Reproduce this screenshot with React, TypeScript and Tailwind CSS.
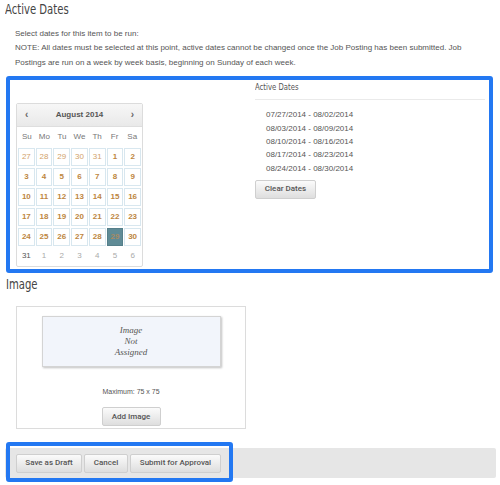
import React from "react";

const narrow = { fontFamily: '"Liberation Sans Narrow", "DejaVu Sans Condensed", Roboto, sans-serif' };
const arial = { fontFamily: '"Liberation Sans", Arial, sans-serif' };
const roboto = { fontFamily: 'Roboto, "Liberation Sans", sans-serif' };

type Cell = { d: number; kind: "prev" | "cur" | "sel" };

const rows: Cell[][] = [
  [27, 28, 29, 30, 31].map((d) => ({ d, kind: "prev" as const })).concat([1, 2].map((d) => ({ d, kind: "cur" as const }))),
  [3, 4, 5, 6, 7, 8, 9].map((d) => ({ d, kind: "cur" as const })),
  [10, 11, 12, 13, 14, 15, 16].map((d) => ({ d, kind: "cur" as const })),
  [17, 18, 19, 20, 21, 22, 23].map((d) => ({ d, kind: "cur" as const })),
  [24, 25, 26, 27, 28, 29, 30].map((d) => ({ d, kind: d === 29 ? ("sel" as const) : ("cur" as const) })),
];
const lastRow = [31, 1, 2, 3, 4, 5, 6];

function Calendar() {
  return (
    <div className="w-[127px] border border-[#dcdcdc] rounded-[2px] bg-white" style={arial}>
      <div className="h-[23px] flex items-center justify-between px-[8px] bg-gradient-to-b from-[#f7f7f7] to-[#e9e9e9] border-b border-[#dedede] text-[#666]">
        <span className="text-[10px] font-bold leading-none">‹</span>
        <span className="text-[8px] font-bold text-[#555]">August 2014</span>
        <span className="text-[10px] font-bold leading-none">›</span>
      </div>
      <div className="grid grid-cols-7 h-[21px] items-center px-[1px] text-[8px] text-[#777]">
        {["Su", "Mo", "Tu", "We", "Th", "Fr", "Sa"].map((n) => (
          <div key={n} className="text-center">{n}</div>
        ))}
      </div>
      <div className="flex flex-col gap-y-[2px] px-[1px]">
        {rows.map((r, i) => (
          <div key={i} className="grid grid-cols-7 gap-x-[1px]">
            {r.map((c, j) => (
              <div
                key={j}
                className={
                  "h-[18px] flex items-center justify-center text-[8px] border " +
                  (c.kind === "sel"
                    ? "bg-[#5f8b96] border-[#557f8a] text-[#a88a62] font-bold"
                    : c.kind === "prev"
                    ? "border-[#d8e7ef] text-[#d2a26a]"
                    : "border-[#d8e7ef] text-[#bd8640] font-bold")
                }
              >
                {c.d}
              </div>
            ))}
          </div>
        ))}
      </div>
      <div className="grid grid-cols-7 gap-x-[1px] px-[1px] h-[18px] items-center mt-[1px] mb-[1px]">
        {lastRow.map((d, j) => (
          <div key={j} className={"text-center text-[8px] " + (j === 0 ? "text-[#555]" : "text-[#aaa]")}>
            {d}
          </div>
        ))}
      </div>
    </div>
  );
}

function Btn({ children, className = "" }: { children: React.ReactNode; className?: string }) {
  return (
    <div
      className={
        "h-[19px] flex items-center justify-center border border-[#cfcfcf] rounded-[2px] bg-gradient-to-b from-[#fbfbfb] to-[#dedede] text-[#555] text-[8px] font-medium " +
        className
      }
      style={roboto}
    >
      {children}
    </div>
  );
}

export default function App() {
  return (
    <div className="w-[500px] h-[485px] bg-white overflow-hidden relative text-[#555]">
      <h2 className="pl-[5px] pt-[1px] text-[14px] leading-[16px] text-[#444]" style={narrow}>
        <span className="inline-block scale-x-[0.8] origin-left">Active Dates</span>
      </h2>
      <div className="ml-[15px] mt-[10px] w-[470px] text-[8px] leading-[14.3px] text-[#555]" style={arial}>
        <p>Select dates for this item to be run:</p>
        <p>
          NOTE: All dates must be selected at this point, active dates cannot be changed once the Job Posting has been
          submitted. Job Postings are run on a week by week basis, beginning on Sunday of each week.
        </p>
      </div>

      <div className="mt-[6px] ml-[6px] w-[487px] h-[197px] border-4 border-[#2378f2] rounded-[3px] flex">
        <div className="pl-[6px] pt-[23px] w-[245px]">
          <Calendar />
        </div>
        <div className="pt-[1px] w-[230px]">
          <div className="text-[9px] text-[#555] pb-[5px] border-b border-[#eaeaea]" style={narrow}>
            <span className="inline-block scale-x-[0.85] origin-left">Active Dates</span>
          </div>
          <ul className="pl-[11px] pt-[8px] text-[8px] leading-[13.3px] text-[#555]" style={arial}>
            <li>07/27/2014 - 08/02/2014</li>
            <li>08/03/2014 - 08/09/2014</li>
            <li>08/10/2014 - 08/16/2014</li>
            <li>08/17/2014 - 08/23/2014</li>
            <li>08/24/2014 - 08/30/2014</li>
          </ul>
          <Btn className="mt-[5px] w-[61px]">Clear Dates</Btn>
        </div>
      </div>

      <h2 className="pl-[6px] mt-[3px] text-[14px] leading-[16px] text-[#444]" style={narrow}>
        <span className="inline-block scale-x-[0.8] origin-left">Image</span>
      </h2>
      <div className="ml-[16px] mt-[14px] w-[230px] h-[123px] border border-[#dcdcdc] flex flex-col items-center pt-[9px]">
        <div
          className="w-[179px] h-[51px] bg-[#f2f5fb] border border-[#d4d4d4] shadow-[1px_1px_2px_rgba(0,0,0,0.25)] flex flex-col items-center justify-center text-[9px] leading-[11px] italic text-[#555]"
          style={{ fontFamily: '"Liberation Serif", "Times New Roman", serif' }}
        >
          <span>Image</span>
          <span>Not</span>
          <span>Assigned</span>
        </div>
        <div className="mt-[20px] text-[7px] text-[#555]" style={arial}>
          Maximum: 75 x 75
        </div>
        <Btn className="mt-[10px] w-[59px] text-[#444]">Add Image</Btn>
      </div>

      <div className="relative ml-[5px] mt-[19px] w-[491px] h-[30px] bg-[#e6e6e6] rounded-[2px]">
        <div className="absolute left-[1px] top-[-6px] w-[227px] h-[40px] border-4 border-[#2378f2] rounded-[3px]" />
        <div className="absolute left-[11px] top-[6px] flex gap-[2px]">
          <Btn className="w-[66px]">Save as Draft</Btn>
          <Btn className="w-[44px]">Cancel</Btn>
          <Btn className="w-[91px]">Submit for Approval</Btn>
        </div>
      </div>
    </div>
  );
}
